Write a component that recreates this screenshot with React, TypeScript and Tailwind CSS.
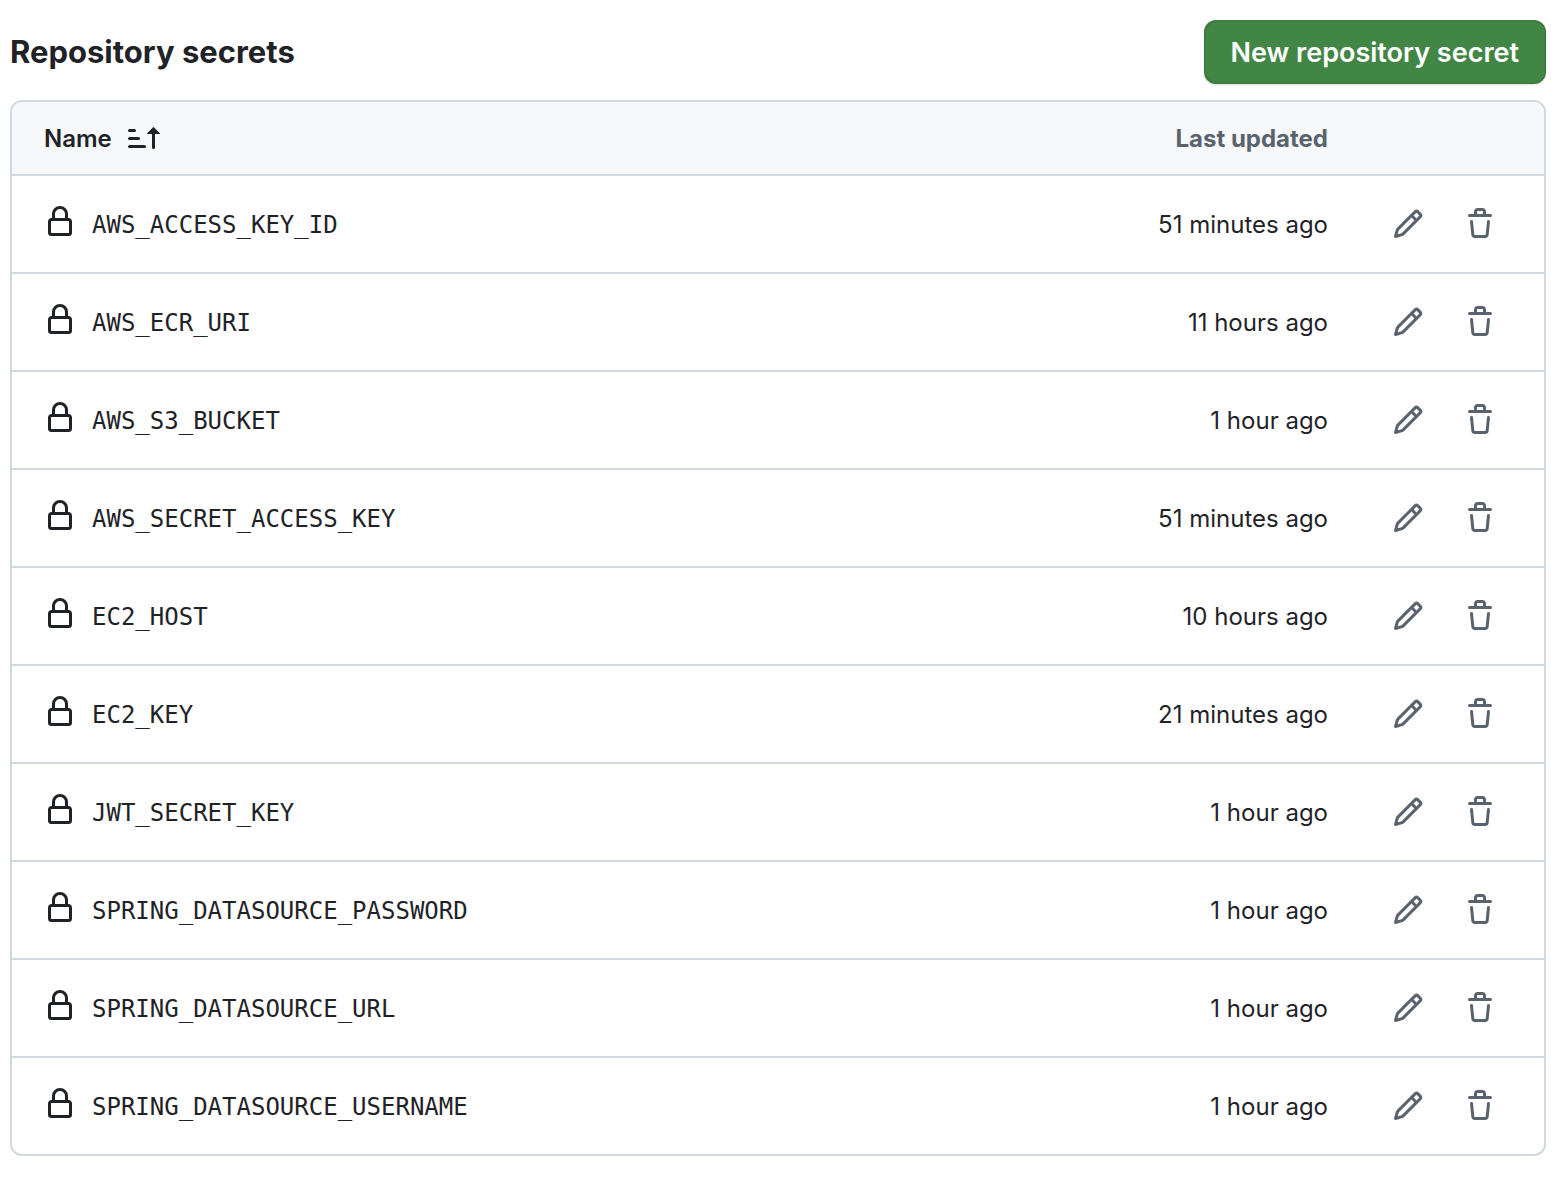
interface Secret {
  name: string
  updated: string
}

const secrets: Secret[] = [
  { name: 'AWS_ACCESS_KEY_ID', updated: '51 minutes ago' },
  { name: 'AWS_ECR_URI', updated: '11 hours ago' },
  { name: 'AWS_S3_BUCKET', updated: '1 hour ago' },
  { name: 'AWS_SECRET_ACCESS_KEY', updated: '51 minutes ago' },
  { name: 'EC2_HOST', updated: '10 hours ago' },
  { name: 'EC2_KEY', updated: '21 minutes ago' },
  { name: 'JWT_SECRET_KEY', updated: '1 hour ago' },
  { name: 'SPRING_DATASOURCE_PASSWORD', updated: '1 hour ago' },
  { name: 'SPRING_DATASOURCE_URL', updated: '1 hour ago' },
  { name: 'SPRING_DATASOURCE_USERNAME', updated: '1 hour ago' },
]

const icons = {
  lock: 'M4 4a4 4 0 0 1 8 0v2h.25c.966 0 1.75.784 1.75 1.75v5.5A1.75 1.75 0 0 1 12.25 15h-8.5A1.75 1.75 0 0 1 2 13.25v-5.5C2 6.784 2.784 6 3.75 6H4Zm8.25 3.5h-8.5a.25.25 0 0 0-.25.25v5.5c0 .138.112.25.25.25h8.5a.25.25 0 0 0 .25-.25v-5.5a.25.25 0 0 0-.25-.25ZM10.5 6V4a2.5 2.5 0 1 0-5 0v2Z',
  pencil:
    'M11.013 1.427a1.75 1.75 0 0 1 2.474 0l1.086 1.086a1.75 1.75 0 0 1 0 2.474l-8.61 8.61c-.21.21-.47.364-.756.445l-3.251.93a.75.75 0 0 1-.927-.928l.929-3.25c.081-.286.235-.547.445-.758l8.61-8.61Zm.176 4.823L9.75 4.81l-6.286 6.287a.253.253 0 0 0-.064.108l-.558 1.953 1.953-.558a.253.253 0 0 0 .108-.064Zm1.238-3.763a.25.25 0 0 0-.354 0L10.811 3.75l1.439 1.44 1.263-1.263a.25.25 0 0 0 0-.354Z',
  trash:
    'M11 1.75V3h2.25a.75.75 0 0 1 0 1.5H2.75a.75.75 0 0 1 0-1.5H5V1.75C5 .784 5.784 0 6.75 0h2.5C10.216 0 11 .784 11 1.75ZM4.496 6.675l.66 6.6a.25.25 0 0 0 .249.225h5.19a.25.25 0 0 0 .249-.225l.66-6.6a.75.75 0 0 1 1.492.149l-.66 6.6A1.748 1.748 0 0 1 10.595 15h-5.19a1.75 1.75 0 0 1-1.741-1.575l-.66-6.6a.75.75 0 1 1 1.492-.15ZM6.5 1.75V3h3V1.75a.25.25 0 0 0-.25-.25h-2.5a.25.25 0 0 0-.25.25Z',
  sortAsc:
    'm12.927 2.573 3 3A.25.25 0 0 1 15.75 6H13.5v6.75a.75.75 0 0 1-1.5 0V6H9.75a.25.25 0 0 1-.177-.427l3-3a.25.25 0 0 1 .354 0ZM0 12.25a.75.75 0 0 1 .75-.75h7.5a.75.75 0 0 1 0 1.5H.75a.75.75 0 0 1-.75-.75Zm0-4a.75.75 0 0 1 .75-.75h4.5a.75.75 0 0 1 0 1.5H.75a.75.75 0 0 1-.75-.75Zm0-4a.75.75 0 0 1 .75-.75h2.5a.75.75 0 0 1 0 1.5H.75a.75.75 0 0 1-.75-.75Z',
}

function Icon({ name }: { name: keyof typeof icons }) {
  return (
    <svg viewBox="0 0 16 16" fill="currentColor" aria-hidden="true" className="size-8 shrink-0">
      <path d={icons[name]} />
    </svg>
  )
}

function SecretRow({ secret }: { secret: Secret }) {
  return (
    <tr>
      <td className="border-t-2 border-[#d1d9e0] pl-8">
        <div className="flex h-24 items-center gap-4">
          <span className="pb-1">
            <Icon name="lock" />
          </span>
          <span className="pt-0.5 font-['DejaVu_Sans_Mono',monospace]">{secret.name}</span>
        </div>
      </td>
      <td className="border-t-2 border-[#d1d9e0] pt-0.5 text-right whitespace-nowrap">{secret.updated}</td>
      <td className="w-[216px] border-t-2 border-[#d1d9e0] pr-12">
        <div className="flex justify-end gap-10 text-[#59636e]">
          <button type="button" aria-label={`Edit ${secret.name}`}>
            <Icon name="pencil" />
          </button>
          <button type="button" aria-label={`Delete ${secret.name}`}>
            <Icon name="trash" />
          </button>
        </div>
      </td>
    </tr>
  )
}

export default function App() {
  return (
    <main className="min-h-screen bg-white pt-5 pr-[22px] pb-7 pl-2.5 font-['Inter',sans-serif] text-2xl text-[#1f2328]">
      <div className="mb-4 flex items-center justify-between">
        <h2 className="text-[31px] leading-12 font-bold">Repository secrets</h2>
        <button
          type="button"
          className="h-16 rounded-xl border-2 border-[#3d7b40] bg-[#428646] px-[25px] pt-0.5 text-[27px] font-semibold text-white shadow-sm"
        >
          New repository secret
        </button>
      </div>
      <div className="overflow-hidden rounded-xl border-2 border-[#d1d9e0]">
        <table className="w-full border-separate border-spacing-0">
          <thead className="bg-[#f6f8fa]">
            <tr className="h-[72px]">
              <th className="pl-8 text-left font-semibold">
                <button type="button" className="flex items-center gap-4">
                  <span className="pt-0.5">Name</span>
                  <Icon name="sortAsc" />
                </button>
              </th>
              <th className="pt-0.5 text-right font-bold text-[#59636e]">Last updated</th>
              <th className="w-[216px]" aria-label="Actions"></th>
            </tr>
          </thead>
          <tbody>
            {secrets.map((secret) => (
              <SecretRow key={secret.name} secret={secret} />
            ))}
          </tbody>
        </table>
      </div>
    </main>
  )
}
